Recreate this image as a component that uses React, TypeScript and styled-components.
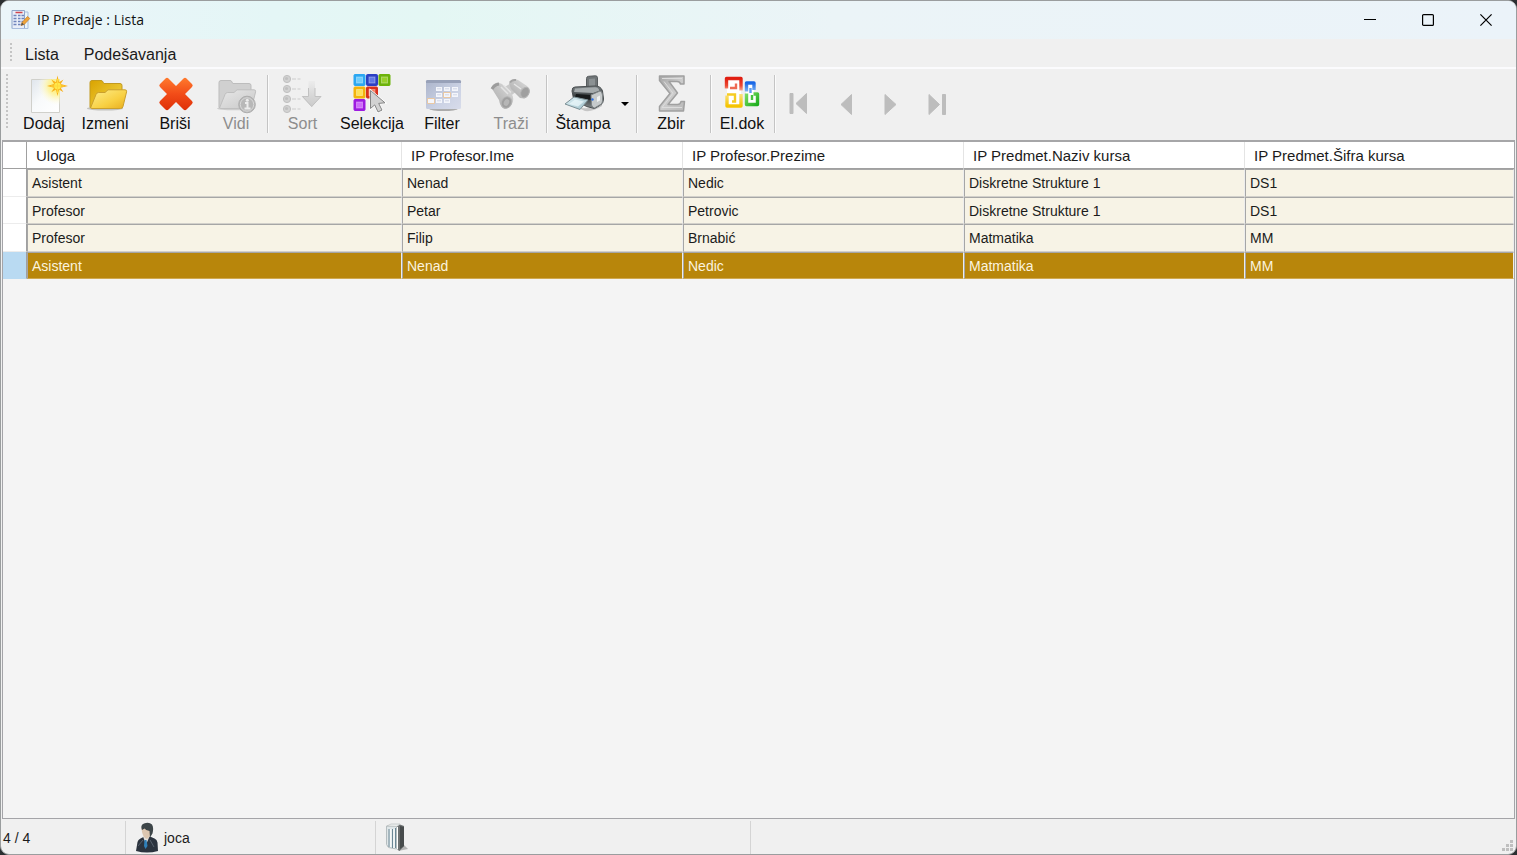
import React from "react";
import styled, { createGlobalStyle, css } from "styled-components";

const GlobalStyle = createGlobalStyle`
  * { box-sizing: border-box; }
  body {
    margin: 0;
    background: #2b2f31;
    font-family: "Liberation Sans", Arial, sans-serif;
    color: #1b1b1b;
  }
  button { font: inherit; color: inherit; }
`;

const Window = styled.div`
  display: flex;
  flex-direction: column;
  height: 100vh;
  border: 1px solid #9a9d9e;
  border-radius: 9px;
  overflow: hidden;
  background: #f0f0f0;
`;

const TitleBar = styled.header`
  display: flex;
  align-items: center;
  flex: none;
  height: 38px;
  padding-left: 9px;
  padding-right: 1px;
  background: linear-gradient(90deg, #ebf5f9 0%, #e4f6f6 18%, #e4f7f4 28%, #ebf4f7 55%, #ebf3f9 100%);
`;

const Title = styled.h1`
  flex: 1;
  margin: 0 0 0 5px;
  font: 400 14px/20px "Open Sans", "Noto Sans", sans-serif;
  color: #111;
`;

const WindowButton = styled.button`
  display: grid;
  place-items: center;
  width: 58px;
  height: 38px;
  padding: 0;
  border: 0;
  background: none;
`;

const Grip = styled.span<{ $height: number }>`
  flex: none;
  width: 2px;
  margin-right: 1px;
  height: ${(p) => p.$height}px;
  background: repeating-linear-gradient(#c4c4c4 0 2px, transparent 2px 4px);
`;

const MenuBar = styled.nav`
  display: flex;
  align-items: flex-start;
  flex: none;
  height: 30px;
  padding: 4px 0 0 9px;
  border-bottom: 2px solid #fbfbfd;
`;

const MenuItem = styled.button`
  height: 24px;
  margin-left: 3px;
  margin-right: 4px;
  padding: 0 9px;
  border: 0;
  background: none;
  font-size: 16px;
  line-height: 24px;
`;

const ToolBar = styled.div`
  display: flex;
  align-items: flex-start;
  flex: none;
  height: 71px;
  padding: 5px 0 0 5px;
`;

const Tool = styled.button<{ $width: number }>`
  display: flex;
  flex-direction: column;
  align-items: center;
  flex: none;
  width: ${(p) => p.$width}px;
  padding: 0;
  border: 0;
  background: none;
  font-size: 16px;
  line-height: 20px;
  color: #111;
  &:disabled { color: #8d8d8d; }
`;

const ToolIcon = styled.svg.attrs({ width: 48, height: 40, viewBox: "0 0 48 40", "aria-hidden": true })`
  display: block;
  flex: none;
`;

const Separator = styled.span<{ $before?: number }>`
  flex: none;
  width: 2px;
  height: 58px;
  margin: 1px 0 0 ${(p) => p.$before ?? 0}px;
  border-left: 1px solid #c4c4c4;
  border-right: 1px solid #fbfbfb;
`;

const DropButton = styled.button`
  display: grid;
  place-items: center;
  width: 13px;
  height: 60px;
  padding: 0;
  border: 0;
  background: none;
`;

const NavButton = styled.button`
  display: grid;
  place-items: center;
  width: 46px;
  height: 60px;
  padding: 0;
  border: 0;
  background: none;
`;

const GridArea = styled.main`
  flex: 1;
  min-height: 0;
  margin: 0 1px;
  border: 1px solid #a4a4a8;
  border-top: 2px solid #a6a6a8;
  background: #f4f4f4;
`;

const DataTable = styled.table`
  width: 100%;
  table-layout: fixed;
  border-collapse: separate;
  border-spacing: 0;
`;

const HeadCell = styled.th`
  height: 27px;
  padding: 0 8px 0 9px;
  border-right: 1px solid #e4e4e4;
  border-bottom: 1px solid #a0a0a0;
  background: #fff;
  font-size: 15px;
  font-weight: 400;
  text-align: left;
  white-space: nowrap;
  &:first-child { border-right-color: #a0a0a0; }
  &:last-child { border-right: 0; }
`;

const Row = styled.tr<{ $selected?: boolean }>`
  height: 28px;
  &:nth-child(even) { height: 27px; }
  > th {
    padding: 0;
    border-right: 1px solid #a0a0a0;
    border-bottom: 1px solid ${(p) => (p.$selected ? "#b9daf2" : "#ececec")};
    background: ${(p) => (p.$selected ? "#b9daf2" : "#fff")};
  }
  > td {
    padding: 0 4px;
    border-left: 1px solid #a6a6a6;
    border-top: 1px solid #a6a6a6;
    border-right: 1px solid #ededed;
    border-bottom: 1px solid #d2d0cb;
    background: #f7f3e6;
    font-size: 14px;
    line-height: 20px;
    white-space: nowrap;
    ${(p) =>
      p.$selected &&
      css`
        background: #b8860b;
        border-bottom-color: #cfa850;
        color: #fbf3df;
      `}
  }
`;

const StatusBar = styled.footer`
  display: flex;
  align-items: stretch;
  flex: none;
  height: 35px;
  padding-top: 2px;
  font-size: 14px;
`;

const StatusCell = styled.div<{ $width?: number; $pad?: number }>`
  display: flex;
  align-items: center;
  gap: 5px;
  flex: ${(p) => (p.$width ? `0 0 ${p.$width}px` : "1")};
  padding-left: ${(p) => p.$pad ?? 2}px;
  border-right: ${(p) => (p.$width ? "1px solid #d4d4d4" : "0")};
`;

const ResizeGrip = styled.svg`
  align-self: flex-end;
  margin: 0 2px 2px auto;
`;

const AppIcon = () => (
  <svg width="22" height="22" viewBox="0 0 22 22" aria-hidden="true">
    <path d="M2 1.500h12.500v18H2z" fill="#e9eef8" stroke="#8fa4c8" />
    <path d="M5.500 3.500h7" stroke="#d0454c" strokeWidth="1.600" />
    <path d="M3.500 6.500h3M3.500 9.500h3M3.500 12.500h3M3.500 15.500h3M8 6.500h2.500M8 9.500h2.500M8 12.500h2.500M8 15.500h2.500M11.500 6.500h2.500M11.500 9.500h2.500M11.500 12.500h2" stroke="#6f84bc" strokeWidth="1.700" />
    <path d="M14.500 3h3.500v16.500H2" fill="none" stroke="#a9bddd" />
    <path d="M11 16.500l1-3 5.500-6 2.300 2-5.600 6z" fill="#f0a437" stroke="#c27a24" strokeWidth=".7" />
    <path d="M11 16.500l1-3 2 2z" fill="#555" />
  </svg>
);

const AddIcon = () => (
  <ToolIcon>
    <defs>
      <linearGradient id="page" x1="0" y1="0" x2="1" y2="1">
        <stop offset="0" stopColor="#dfe5ec" />
        <stop offset=".45" stopColor="#f8fafb" />
        <stop offset="1" stopColor="#fff" />
      </linearGradient>
      <radialGradient id="glow">
        <stop offset="0" stopColor="#ffe94a" />
        <stop offset=".5" stopColor="#fdf39a" stopOpacity=".8" />
        <stop offset="1" stopColor="#fffbe0" stopOpacity="0" />
      </radialGradient>
      <clipPath id="pageClip"><path d="M12 5h28v33.500H12z" /></clipPath>
    </defs>
    <path d="M11.500 5.500h28v33h-28z" fill="url(#page)" stroke="#d0d0cb" />
    <circle cx="37" cy="12" r="19" fill="url(#glow)" clipPath="url(#pageClip)" />
    <path d="M37.500 1.500l1.500 6.800 4.500-2.800-2.800 4.600 7.300 1.900-7.300 1.700 2.800 4.600-4.500-2.800-1.500 6.500-1.500-6.500-4.700 2.800 2.900-4.600-7.200-1.700 7.200-1.900-2.900-4.600 4.700 2.800z" fill="#f8b01a" />
    <circle cx="37.500" cy="12" r="3.400" fill="#ffe84a" />
    <path d="M37.500 5v14M31 12h13" stroke="#ffd83c" strokeWidth="1" />
  </ToolIcon>
);

const FolderIcon = () => (
  <ToolIcon>
    <defs>
      <linearGradient id="back" x1="0" y1="0" x2="1" y2="1">
        <stop offset="0" stopColor="#d9a300" /><stop offset="1" stopColor="#f4d84c" />
      </linearGradient>
      <linearGradient id="front" x1="0" y1="0" x2="1" y2="1">
        <stop offset="0" stopColor="#fdee8d" /><stop offset=".6" stopColor="#f8d043" /><stop offset="1" stopColor="#e8ad1d" />
      </linearGradient>
    </defs>
    <ellipse cx="24" cy="34.500" rx="18" ry="2" fill="#8a8a80" opacity=".45" />
    <path d="M9 33.500V8.500q0-2 2-2h9q1.500 0 2 1.500l.7 1.500H39q2 0 2 2v22z" fill="url(#back)" stroke="#c29a20" />
    <path d="M9.500 34L15 20.500q.7-2 2.700-2h6.300l3-2.700h17q2 0 1.600 2L42 32.500q-.4 2-2.400 2H11z" fill="url(#front)" stroke="#cba02c" />
  </ToolIcon>
);

const DeleteIcon = () => (
  <ToolIcon>
    <defs>
      <linearGradient id="red" x1="0" y1="0" x2="0" y2="1">
        <stop offset="0" stopColor="#ff7a2d" /><stop offset=".5" stopColor="#f24c18" /><stop offset="1" stopColor="#de3008" />
      </linearGradient>
    </defs>
    <path d="M9 10l5.500-5.500q1.500-1.500 3 0L25 12l7.500-7.500q1.500-1.500 3 0L41 10q1.500 1.500 0 3l-7 7 7 7q1.500 1.500 0 3l-5.500 5.500q-1.500 1.500-3 0L25 28l-7.500 7.500q-1.500 1.500-3 0L9 30q-1.500-1.500 0-3l7-7-7-7q-1.500-1.500 0-3z" fill="url(#red)" />
  </ToolIcon>
);

const ViewIcon = () => (
  <ToolIcon>
    <defs>
      <linearGradient id="greyFront" x1="0" y1="0" x2="1" y2="1">
        <stop offset="0" stopColor="#e8e8e8" /><stop offset="1" stopColor="#c8c8c8" />
      </linearGradient>
    </defs>
    <ellipse cx="22" cy="34.500" rx="17" ry="1.800" fill="#999" opacity=".4" />
    <path d="M7 33.500V8.500q0-2 2-2h9q1.500 0 2 1.500l.7 1.500H37q2 0 2 2v22z" fill="#d0d0d0" stroke="#bdbdbd" />
    <path d="M7.500 34L13 20.500q.7-2 2.700-2H22l3-2.700h17q2 0 1.600 2L40 32.500q-.4 2-2.400 2H9z" fill="url(#greyFront)" stroke="#bfbfbf" />
    <circle cx="35" cy="30.500" r="8.300" fill="#b8b8b8" stroke="#adadad" />
    <circle cx="35" cy="30.500" r="6.700" fill="none" stroke="#d8d8d8" />
    <path d="M33 29h2.500v5M32.500 34.500h6" fill="none" stroke="#ececec" strokeWidth="2" />
    <circle cx="35.300" cy="26.300" r="1.500" fill="#ececec" />
  </ToolIcon>
);

const SortIcon = () => (
  <ToolIcon>
    <defs>
      <linearGradient id="arrow" x1="0" y1="0" x2="0" y2="1">
        <stop offset="0" stopColor="#ececec" /><stop offset=".6" stopColor="#d6d6d6" /><stop offset="1" stopColor="#cacaca" />
      </linearGradient>
    </defs>
    {[5, 15, 25, 35].map((y) => (
      <g key={y}>
        <circle cx="8" cy={y} r="3.600" fill="#d2d2d2" stroke="#c0c0c0" />
        <circle cx="7.500" cy={y - 0.5} r="1.600" fill="#c0c0c0" />
        <path d={`M13 ${y}h4M18.500 ${y}h3`} stroke="#d8d8d8" strokeWidth="1.600" />
      </g>
    ))}
    <path d="M29.500 7h6.500v15h6.500L32.700 33 22.500 22h7z" fill="url(#arrow)" />
    <path d="M29.500 14v8.500h-6l9.200 10 9.300-10h-6V14" fill="none" stroke="#c2c2c2" />
  </ToolIcon>
);

const SELECT_TILES: [number, number, string, string][] = [
  [6, 0.5, "#2ba7f2", "#6fcdfc"],
  [18.500, 0.5, "#2b3fc4", "#5f78e6"],
  [31, 0.5, "#6db30a", "#98d02a"],
  [6, 13, "#f2b40c", "#ffe257"],
  [18.500, 13, "#d8301c", "#f67858"],
  [6, 25.500, "#9d1be0", "#cf6cfb"],
];

const SelectIcon = () => (
  <ToolIcon>
    {SELECT_TILES.map(([x, y, edge, fill]) => (
      <g key={`${x}-${y}`}>
        <rect x={x} y={y} width="11" height="11" rx="1" fill={edge} stroke={edge} />
        <rect x={x + 2.500} y={y + 2.500} width="6" height="6" fill={fill} stroke="#fff" strokeOpacity=".35" />
      </g>
    ))}
    <path d="M22.500 16.500v18l4.200-3.600 3.300 7 4-1.800-3.300-6.700 6.300-.6z" fill="#d2d2d2" stroke="#fff" strokeWidth="2" />
    <path d="M22.500 16.500v18l4.200-3.600 3.300 7 4-1.800-3.300-6.700 6.300-.6z" fill="#d2d2d2" stroke="#858585" />
  </ToolIcon>
);

const FILTER_CELLS: [number, number][] = [
  [18, 13], [26, 13], [34, 13], [18, 19], [26, 19], [34, 19], [10, 25], [18, 25], [26, 25],
];

const FilterIcon = () => (
  <ToolIcon>
    <defs>
      <linearGradient id="panel" x1="0" y1="0" x2="1" y2="1">
        <stop offset="0" stopColor="#aab3ca" /><stop offset=".6" stopColor="#cbd2e4" /><stop offset="1" stopColor="#d8dcea" />
      </linearGradient>
    </defs>
    <ellipse cx="25.500" cy="35" rx="14" ry="2" fill="#9a9a9a" opacity=".8" />
    <rect x="8" y="6" width="35" height="29" rx="1.500" fill="url(#panel)" />
    <path d="M8 9V7.500Q8 6 9.500 6h32Q43 6 43 7.500V9z" fill="#98a1b8" />
    {FILTER_CELLS.map(([x, y]) => (
      <rect key={`${x}-${y}`} x={x} y={y} width="6" height="4" fill="#f4f6fb" />
    ))}
    <path d="M27 14.800h4M35 14.800h4M19 14.800h4M19 20.800h4M27 20.800h4M35 20.800h4M19 26.800h4M27 26.800h4" stroke="#d0d6e6" />
    <path d="M25.500 18.500h7v5h-7zM9.500 24.500h7v5h-7z" fill="none" stroke="#eac8a2" />
  </ToolIcon>
);

const FindIcon = () => (
  <ToolIcon>
    <defs>
      <linearGradient id="barrel" x1="1" y1="0" x2="0" y2="1">
        <stop offset="0" stopColor="#e0e0e0" /><stop offset=".5" stopColor="#c2c2c2" /><stop offset="1" stopColor="#a8a8a8" />
      </linearGradient>
    </defs>
    <path d="M16 14l8-5 6 8-9 7z" fill="#c9c9c9" />
    <path d="M22 9q2-4 6-4l3 1 9 6q4 3 2 8-2 4-5 4.500l-4-.5-9-9z" fill="url(#barrel)" />
    <path d="M4.500 14q1-5 6.500-5.500l4 1.500 9 9q4 5 1 11-4 6-9 4-3-2-4-8z" fill="url(#barrel)" />
    <ellipse cx="38" cy="18.500" rx="4" ry="5.500" transform="rotate(28 38 18.500)" fill="#9f9f9f" stroke="#b4b4b4" />
    <ellipse cx="19.500" cy="28.500" rx="5" ry="6" transform="rotate(28 19.500 28.500)" fill="#9f9f9f" stroke="#b4b4b4" />
    <ellipse cx="19.500" cy="28.500" rx="2.500" ry="3.500" transform="rotate(28 19.500 28.500)" fill="#b6b6b6" />
    <path d="M5 15q2-4 7-5" fill="none" stroke="#9c9c9c" strokeWidth="3" />
    <path d="M23 8.500q2-3 6-2.500" fill="none" stroke="#a4a4a4" strokeWidth="2" />
    <path d="M14 13l7 7M17 11.500l7 7M27 10l7 5" stroke="#e4e4e4" strokeWidth="1.500" />
  </ToolIcon>
);

const PrintIcon = () => (
  <ToolIcon>
    <defs>
      <linearGradient id="body" x1="0" y1="0" x2="0" y2="1">
        <stop offset="0" stopColor="#7c8285" /><stop offset=".5" stopColor="#353b3d" /><stop offset="1" stopColor="#858b8d" />
      </linearGradient>
      <linearGradient id="sheet" x1="0" y1="0" x2="1" y2="1">
        <stop offset="0" stopColor="#dff2f6" /><stop offset="1" stopColor="#9fc0cb" />
      </linearGradient>
    </defs>
    <path d="M13 31q16 8 30-3v4q-9 6-17 5z" fill="#aaa" opacity=".6" />
    <path d="M27.500 4.500q0-2 2-2.200l7-.5q2 0 2 2V16l-11 1z" fill="#6f7476" stroke="#575c5e" />
    <path d="M30 5l6-.5v9l-6 1z" fill="#8b9193" />
    <path d="M13 17q0-4 3-4l20-1q6 0 7.500 5l1 8q0 4-3 6l-6 3.500-8-2-13-8z" fill="url(#body)" stroke="#4a4f51" />
    <path d="M16 14.500l20-1.200q3 0 4.500 3.200L34 19l-19-1z" fill="#a5abad" />
    <path d="M17 20l15 1v5l-16-3z" fill="#171a1b" />
    <path d="M32 21l9-4q2 0 2.500 4v6q0 2.500-2 3.500l-6 3.500q-2 0-3-3z" fill="#c6cacb" stroke="#7d8385" />
    <path d="M38 23l3-1.500v5L38 28z" fill="#eef0f0" />
    <circle cx="33.500" cy="25.500" r="1.200" fill="#2e6fe0" />
    <path d="M6 30l9-7 14 3-8 9.500z" fill="url(#sheet)" stroke="#7c9096" />
    <path d="M10 30l6-4.500 9 2-6 5z" fill="#eefafc" opacity=".7" />
  </ToolIcon>
);

const SumIcon = () => (
  <ToolIcon>
    <defs>
      <linearGradient id="sum" x1="0" y1="0" x2="1" y2="1">
        <stop offset="0" stopColor="#a6a6a6" /><stop offset=".5" stopColor="#cccccc" /><stop offset="1" stopColor="#b8b8b8" />
      </linearGradient>
    </defs>
    <path d="M12.500 2H37v8h-3.500Q33 7.500 30 7.500h-8L30.500 19 21 30.500h9.500q3 0 3.500-3h3.500L36.500 37h-24v-4.500L23 19.500 12.500 6.500z" fill="url(#sum)" stroke="#a0a0a0" strokeWidth="1.500" strokeLinejoin="round" />
    <path d="M15 4.500h20M17 7.500l9 11.700-11 14.300h20" fill="none" stroke="#dcdcdc" />
  </ToolIcon>
);

const DocsIcon = () => (
  <ToolIcon>
    <defs>
      <linearGradient id="docRed" x1="0" y1="0" x2="0" y2="1"><stop offset="0" stopColor="#e01d10" /><stop offset=".6" stopColor="#ec4a34" /><stop offset="1" stopColor="#f7a890" /></linearGradient>
      <linearGradient id="docYellow" x1="0" y1="0" x2="0" y2="1"><stop offset="0" stopColor="#fbe27c" /><stop offset="1" stopColor="#f5c400" /></linearGradient>
      <linearGradient id="docBlue" x1="0" y1="0" x2="0" y2="1"><stop offset="0" stopColor="#1766e6" /><stop offset="1" stopColor="#7fb4f2" /></linearGradient>
      <linearGradient id="docGreen" x1="0" y1="0" x2="1" y2="1"><stop offset="0" stopColor="#7bdc62" /><stop offset="1" stopColor="#1fae1f" /></linearGradient>
    </defs>
    <path d="M9 5h14v27H9zM28 10h8v8h3v13H28z" fill="#fff" />
    <g fill="none" strokeWidth="3.400" strokeLinejoin="round">
      <path d="M8.500 14.500V4.500h14.500v12" stroke="url(#docRed)" />
      <path d="M23 20v12H9V21.500" stroke="url(#docYellow)" />
      <path d="M28.500 17.500V9h7.500v7" stroke="url(#docBlue)" />
      <path d="M28.500 19.500v11h11v-10.500h-4" stroke="url(#docGreen)" />
    </g>
    <g fill="none" strokeWidth="2.400">
      <path d="M12 14h6v-4.500" stroke="#ee6a54" />
      <path d="M9 20.500h8v7h-3" stroke="#f6cc22" />
      <path d="M32.500 14v5" stroke="#5c9cf0" />
      <path d="M34 21v5" stroke="#46c43c" />
    </g>
  </ToolIcon>
);

const NavIcon = ({ d }: { d: string }) => (
  <svg width="22" height="24" viewBox="0 0 22 24" aria-hidden="true">
    <path d={d} fill="#bdbdbd" stroke="#bdbdbd" strokeWidth="1" strokeLinejoin="round" />
  </svg>
);

const UserIcon = () => (
  <svg width="24" height="31" viewBox="0 0 24 31" aria-hidden="true">
    <path d="M1 29l1.500-9q.5-2.500 3-3.500l4-2h5.500l4.500 2q2.500 1 3 4l.5 8.500q-11 3-22 0z" fill="#2b333e" />
    <path d="M8 14.500l3 8 3.500-8z" fill="#e2e2df" />
    <path d="M9.500 18h2l1 6-2 3-1.500-3z" fill="#2f7fb8" />
    <path d="M6.500 7q0-5 5-5t5 5.500q0 7-4.500 9.500-4.500-1-5.500-10z" fill="#dcc6b0" />
    <path d="M7 8Q5 2.500 9 1.500q5-2 8 1 2 3 .5 9l-2.500 4-.5-6.500q-4-1-5-2.500z" fill="#3d4548" />
    <path d="M3 24l5-6M19 25l-4-7" stroke="#56606c" />
  </svg>
);

const BookIcon = () => (
  <svg width="25" height="31" viewBox="0 0 25 31" aria-hidden="true">
    <path d="M13 29l10-2-5-5z" fill="#777" opacity=".5" />
    <path d="M1.500 4h10v23l-8-1.500-2-3z" fill="#dfe6e8" stroke="#b5bdbf" />
    <path d="M12 4l3-1.500 4 1.500v20l-4.500 5-2.500-2z" fill="#6c7071" />
    <path d="M15 4l4 1v19l-4 3z" fill="#474b4c" />
    <path d="M4 7v18M7.500 7v19M10.500 6v20" stroke="#6b8795" />
    <path d="M5.800 7v18M9 7v19M12.500 5v22" stroke="#fff" />
    <path d="M2 4l4-2h9l-3 2.500z" fill="#eceeee" stroke="#b4b8b9" strokeWidth=".6" />
  </svg>
);

const COLUMNS = ["Uloga", "IP Profesor.Ime", "IP Profesor.Prezime", "IP Predmet.Naziv kursa", "IP Predmet.Šifra kursa"];

const ROWS = [
  ["Asistent", "Nenad", "Nedic", "Diskretne Strukture 1", "DS1"],
  ["Profesor", "Petar", "Petrovic", "Diskretne Strukture 1", "DS1"],
  ["Profesor", "Filip", "Brnabić", "Matmatika", "MM"],
  ["Asistent", "Nenad", "Nedic", "Matmatika", "MM"],
];
const SELECTED_ROW = 3;

const NAV_ITEMS = [
  { label: "Prvi", d: "M2 1.500h3v20H2zM18.500 1.500v20L8 11.500z" },
  { label: "Prethodni", d: "M17.500 2.500v20L7 12.500z" },
  { label: "Sledeći", d: "M5 2.500v20l11-10z" },
  { label: "Poslednji", d: "M3 2.500v20l10.500-10zM16.500 2.500h3v20h-3z" },
];

export default function App() {
  return (
    <>
      <GlobalStyle />
      <Window>
        <TitleBar>
          <AppIcon />
          <Title>IP Predaje : Lista</Title>
          <WindowButton aria-label="Minimize">
            <svg width="12" height="12"><path d="M0 5.500h12" stroke="#000" /></svg>
          </WindowButton>
          <WindowButton aria-label="Maximize">
            <svg width="12" height="12"><rect x=".6" y=".6" width="10.800" height="10.800" rx="1" fill="none" stroke="#000" strokeWidth="1.200" /></svg>
          </WindowButton>
          <WindowButton aria-label="Close">
            <svg width="12" height="12"><path d="M.4.4l11.200 11.200M11.600.4L.4 11.600" stroke="#000" strokeWidth="1.200" /></svg>
          </WindowButton>
        </TitleBar>

        <MenuBar>
          <Grip $height={18} />
          <MenuItem>Lista</MenuItem>
          <MenuItem>Podešavanja</MenuItem>
        </MenuBar>

        <ToolBar role="toolbar">
          <Grip $height={54} />
          <Tool $width={70}><AddIcon />Dodaj</Tool>
          <Tool $width={52}><FolderIcon />Izmeni</Tool>
          <Tool $width={88}><DeleteIcon />Briši</Tool>
          <Tool $width={34} disabled><ViewIcon />Vidi</Tool>
          <Separator $before={14} />
          <Tool $width={67} disabled><SortIcon />Sort</Tool>
          <Tool $width={72}><SelectIcon />Selekcija</Tool>
          <Tool $width={68}><FilterIcon />Filter</Tool>
          <Tool $width={70} disabled><FindIcon />Traži</Tool>
          <Separator />
          <Tool $width={70}><PrintIcon />Štampa</Tool>
          <DropButton aria-label="Opcije štampe">
            <svg width="8" height="4"><path d="M0 0h8L4 4z" fill="#000" /></svg>
          </DropButton>
          <Separator $before={5} />
          <Tool $width={66}><SumIcon />Zbir</Tool>
          <Separator $before={6} />
          <Tool $width={60}><DocsIcon />El.dok</Tool>
          <Separator $before={2} />
          {NAV_ITEMS.map((item) => (
            <NavButton key={item.label} aria-label={item.label} disabled>
              <NavIcon d={item.d} />
            </NavButton>
          ))}
        </ToolBar>

        <GridArea>
          <DataTable>
            <colgroup>
              <col width="24" />
              <col width="375" />
              <col width="281" />
              <col width="281" />
              <col width="281" />
              <col />
            </colgroup>
            <thead>
              <tr>
                <HeadCell aria-label="Izbor" />
                {COLUMNS.map((c) => <HeadCell key={c} scope="col">{c}</HeadCell>)}
              </tr>
            </thead>
            <tbody>
              {ROWS.map((cells, r) => (
                <Row key={r} $selected={r === SELECTED_ROW}>
                  <th aria-label={`Red ${r + 1}`} />
                  {cells.map((text, c) => <td key={c}>{text}</td>)}
                </Row>
              ))}
            </tbody>
          </DataTable>
        </GridArea>

        <StatusBar>
          <StatusCell $width={125}>4 / 4</StatusCell>
          <StatusCell $width={250} $pad={9}><UserIcon />joca</StatusCell>
          <StatusCell $width={375} $pad={9}><BookIcon /></StatusCell>
          <StatusCell>
            <ResizeGrip width="12" height="12" aria-hidden="true">
              <path d="M8 0h3v3H8zM4 4h3v3H4zM8 4h3v3H8zM0 8h3v3H0zM4 8h3v3H4zM8 8h3v3H8z" fill="#bfbfbf" />
            </ResizeGrip>
          </StatusCell>
        </StatusBar>
      </Window>
    </>
  );
}
